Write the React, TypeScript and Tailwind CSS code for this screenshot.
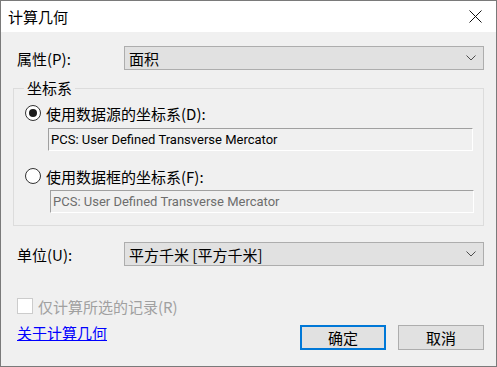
import React, { useState } from 'react';

const FONT = { fontFamily: '"Noto Sans CJK SC", "Noto Sans", sans-serif' };
const BOX_FONT = { fontFamily: 'Roboto, "Liberation Sans", sans-serif' };

function Chevron() {
  return (
    <svg width="10" height="6" viewBox="0 0 10 6" className="shrink-0">
      <path d="M0.5 0.5 L5 5 L9.5 0.5" fill="none" stroke="#4d4d4d" strokeWidth="1" />
    </svg>
  );
}

function Combo({ value }: { value: string }) {
  return (
    <div className="w-[360px] h-[24px] bg-[#e1e1e1] border border-[#adadad] flex items-center justify-between pl-[4px] pr-[7px] text-[15px] text-black">
      <span className="leading-none">{value}</span>
      <Chevron />
    </div>
  );
}

function Radio({ checked, onClick }: { checked: boolean; onClick: () => void }) {
  return (
    <button
      type="button"
      onClick={onClick}
      className="w-[16px] h-[16px] rounded-full border border-[#333333] bg-white flex items-center justify-center shrink-0"
    >
      {checked && <span className="w-[8px] h-[8px] rounded-full bg-[#1a1a1a]" />}
    </button>
  );
}

function SunkenBox({ text, dim }: { text: string; dim?: boolean }) {
  return (
    <div
      style={BOX_FONT}
      className={`h-[23px] border-t border-l border-t-[#a0a0a0] border-l-[#a0a0a0] border-b border-r border-b-white border-r-white bg-[#f0f0f0] flex items-center pl-[2px] text-[13px] ${dim ? 'text-[#6d6d6d]' : 'text-black'}`}
    >
      <span className="leading-none">{text}</span>
    </div>
  );
}

export default function App() {
  const [source, setSource] = useState<'data' | 'frame'>('data');

  return (
    <div style={FONT} className="w-[497px] h-[367px] border border-[#7a7a7a] bg-[#f0f0f0] flex flex-col overflow-hidden">
      {/* Title bar */}
      <div className="h-[31px] bg-white flex items-center justify-between pl-[7px] pr-[14px] shrink-0">
        <span className="text-[15px] text-black leading-none">计算几何</span>
        <svg width="13" height="13" viewBox="0 0 13 13">
          <path d="M0.5 0.5 L12.5 12.5 M12.5 0.5 L0.5 12.5" stroke="#111" strokeWidth="1" />
        </svg>
      </div>

      {/* Body */}
      <div className="flex flex-col text-[15px] text-black">
        <div className="mt-[14px] h-[24px] flex items-center pl-[16px]">
          <span className="w-[107px] leading-none">属性(P):</span>
          <Combo value="面积" />
        </div>

        {/* Group box */}
        <div className="relative mt-[18px] ml-[12px] w-[471px] h-[138px] border border-[#dcdcdc] flex flex-col">
          <span className="absolute -top-[11px] left-[10px] bg-[#f0f0f0] px-[3px] leading-[20px]">坐标系</span>

          <div className="mt-[16px] h-[16px] flex items-center pl-[11px] gap-[5px]">
            <Radio checked={source === 'data'} onClick={() => setSource('data')} />
            <span className="leading-none">使用数据源的坐标系(D):</span>
          </div>
          <div className="mt-[7px] ml-[34px] w-[425px]">
            <SunkenBox text="PCS: User Defined Transverse Mercator" />
          </div>

          <div className="mt-[17px] h-[16px] flex items-center pl-[11px] gap-[5px]">
            <Radio checked={source === 'frame'} onClick={() => setSource('frame')} />
            <span className="leading-none">使用数据框的坐标系(F):</span>
          </div>
          <div className="mt-[6px] ml-[36px] w-[424px]">
            <SunkenBox text="PCS: User Defined Transverse Mercator" dim />
          </div>
        </div>

        <div className="mt-[16px] h-[24px] flex items-center pl-[16px]">
          <span className="w-[107px] leading-none">单位(U):</span>
          <Combo value="平方千米 [平方千米]" />
        </div>

        <div className="mt-[32px] h-[16px] flex items-center pl-[16px] gap-[5px]">
          <span className="w-[16px] h-[16px] border border-[#cccccc] bg-white shrink-0" />
          <span className="leading-none text-[#a0a0a0]">仅计算所选的记录(R)</span>
        </div>

        <div className="mt-[11px] h-[25px] flex items-start justify-between pl-[16px] pr-[12px]">
          <a href="#" className="text-[#0000ff] underline leading-[16px]">关于计算几何</a>
          <div className="flex gap-[12px]">
            <button type="button" className="w-[86px] h-[25px] border-2 border-[#0078d7] bg-[#e1e1e1] flex items-center justify-center leading-none">
              确定
            </button>
            <button type="button" className="w-[86px] h-[25px] border border-[#adadad] bg-[#e1e1e1] flex items-center justify-center leading-none">
              取消
            </button>
          </div>
        </div>
      </div>
    </div>
  );
}
